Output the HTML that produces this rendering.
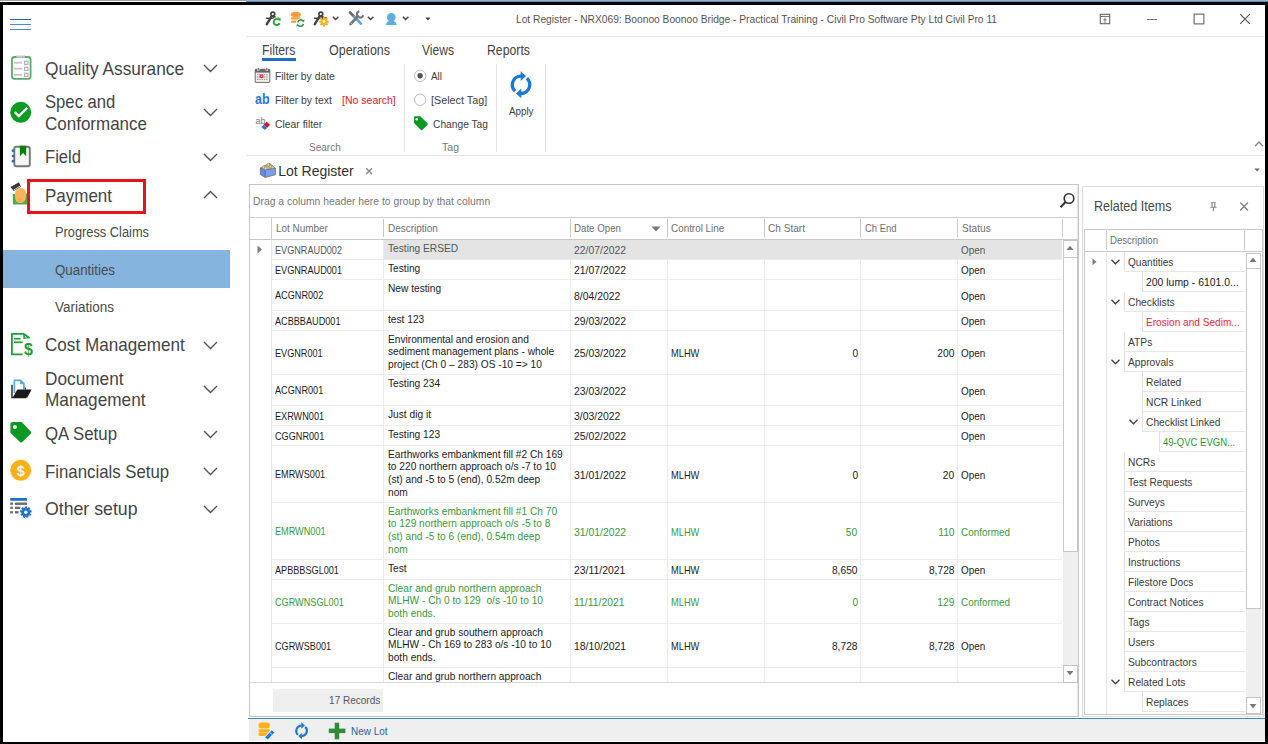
<!DOCTYPE html>
<html><head><meta charset="utf-8"><title>Lot Register</title>
<style>
html,body{margin:0;padding:0;width:1268px;height:744px;overflow:hidden;background:#fff;}
body{position:relative;font-family:"Liberation Sans", sans-serif;}
.a{position:absolute;}
.t{position:absolute;white-space:pre;font-family:"Liberation Sans", sans-serif;}
svg{position:absolute;overflow:visible;}
</style></head><body>
<div class="a" style="left:0px;top:0px;width:246px;height:1px;background:#a0a0a4;"></div>
<div class="a" style="left:246px;top:0px;width:1022px;height:1px;background:#b0aca8;"></div>
<div class="a" style="left:0px;top:1px;width:246px;height:1px;background:#ffffff;"></div>
<div class="a" style="left:246px;top:1px;width:1022px;height:1px;background:#4a90d9;"></div>
<div class="a" style="left:0px;top:2px;width:1268px;height:3px;background:#000;"></div>
<div class="a" style="left:0px;top:2px;width:3px;height:742px;background:#000;"></div>
<div class="a" style="left:1265px;top:2px;width:3px;height:742px;background:#000;"></div>
<div class="a" style="left:0px;top:742px;width:1268px;height:2px;background:#000;"></div>
<div class="a" style="left:10px;top:19px;width:21px;height:1px;background:#1e6cc0;"></div>
<div class="a" style="left:10px;top:18.6px;width:21px;height:1.6px;background:#1e6cc0;"></div>
<div class="a" style="left:10px;top:24px;width:21px;height:1.2px;background:#4b8bd2;"></div>
<div class="a" style="left:10px;top:29px;width:21px;height:1.2px;background:#4b8bd2;"></div>
<svg style="left:203px;top:63.9px" width="16" height="9"><polyline points="1,1 7.5,7.5 14,1" fill="none" stroke="#555" stroke-width="1.4"/></svg>
<svg style="left:203px;top:108.0px" width="16" height="9"><polyline points="1,1 7.5,7.5 14,1" fill="none" stroke="#555" stroke-width="1.4"/></svg>
<svg style="left:203px;top:153.2px" width="16" height="9"><polyline points="1,1 7.5,7.5 14,1" fill="none" stroke="#555" stroke-width="1.4"/></svg>
<svg style="left:203px;top:190.2px" width="16" height="9"><polyline points="1,8 7.5,1.5 14,8" fill="none" stroke="#505050" stroke-width="1.4"/></svg>
<div class="a" style="left:3px;top:250px;width:227px;height:38px;background:#85b4de;"></div>
<svg style="left:203px;top:341.2px" width="16" height="9"><polyline points="1,1 7.5,7.5 14,1" fill="none" stroke="#555" stroke-width="1.4"/></svg>
<svg style="left:203px;top:385.4px" width="16" height="9"><polyline points="1,1 7.5,7.5 14,1" fill="none" stroke="#555" stroke-width="1.4"/></svg>
<svg style="left:203px;top:429.7px" width="16" height="9"><polyline points="1,1 7.5,7.5 14,1" fill="none" stroke="#555" stroke-width="1.4"/></svg>
<svg style="left:203px;top:467.0px" width="16" height="9"><polyline points="1,1 7.5,7.5 14,1" fill="none" stroke="#555" stroke-width="1.4"/></svg>
<svg style="left:203px;top:504.9px" width="16" height="9"><polyline points="1,1 7.5,7.5 14,1" fill="none" stroke="#555" stroke-width="1.4"/></svg>
<div class="a" style="left:27px;top:179px;width:119px;height:35px;border:3px solid #e3141e;box-sizing:border-box;"></div>
<div class="a" style="left:246px;top:36px;width:1018px;height:1px;background:#e3e3e3;"></div>
<div class="a" style="left:262px;top:58px;width:34px;height:3px;background:#1f6cc0;"></div>
<div class="a" style="left:404px;top:64px;width:1px;height:88px;background:#e3e3e3;"></div>
<div class="a" style="left:496px;top:64px;width:1px;height:88px;background:#e3e3e3;"></div>
<div class="a" style="left:545px;top:64px;width:1px;height:88px;background:#e3e3e3;"></div>
<div class="a" style="left:246px;top:155px;width:1018px;height:1px;background:#e3e3e3;"></div>
<svg style="left:365px;top:167px" width="9" height="9"><path d="M1.2,1.2 L7,7 M7,1.2 L1.2,7" stroke="#8a8a8a" stroke-width="1.4"/></svg>
<div class="a" style="left:249px;top:184px;width:830px;height:533px;border:1px solid #c6c6c6;box-sizing:border-box;"></div>
<div class="a" style="left:1077px;top:185px;width:1px;height:55px;background:#e4e4e4;"></div>
<div class="a" style="left:1077px;top:682px;width:1px;height:34px;background:#e4e4e4;"></div>
<div class="a" style="left:249px;top:217px;width:829px;height:1px;background:#d0d0d0;"></div>
<div class="a" style="left:249px;top:239px;width:829px;height:1px;background:#c8c8c8;"></div>
<div class="a" style="left:271px;top:217px;width:1px;height:23px;background:#d0d0d0;"></div>
<div class="a" style="left:271px;top:240px;width:1px;height:443px;background:#e8e8e8;"></div>
<div class="a" style="left:383px;top:219px;width:1px;height:18px;background:#c8c8c8;"></div>
<div class="a" style="left:570px;top:219px;width:1px;height:18px;background:#c8c8c8;"></div>
<div class="a" style="left:667px;top:219px;width:1px;height:18px;background:#c8c8c8;"></div>
<div class="a" style="left:764px;top:219px;width:1px;height:18px;background:#c8c8c8;"></div>
<div class="a" style="left:860px;top:219px;width:1px;height:18px;background:#c8c8c8;"></div>
<div class="a" style="left:957px;top:219px;width:1px;height:18px;background:#c8c8c8;"></div>
<div class="a" style="left:1062px;top:219px;width:1px;height:18px;background:#c8c8c8;"></div>
<svg style="left:651px;top:226px" width="10" height="6"><polygon points="0.5,0.5 9.5,0.5 5,5.5" fill="#7a7a7a"/></svg>
<svg style="left:257px;top:245px" width="6" height="9"><polygon points="0.5,0.5 5,4.5 0.5,8.5" fill="#7d7d7d"/></svg>
<div class="a" style="left:272px;top:259px;width:790px;height:1px;background:#ececec;"></div>
<div class="a" style="left:272px;top:279px;width:790px;height:1px;background:#ececec;"></div>
<div class="a" style="left:272px;top:310px;width:790px;height:1px;background:#ececec;"></div>
<div class="a" style="left:272px;top:330px;width:790px;height:1px;background:#ececec;"></div>
<div class="a" style="left:272px;top:374px;width:790px;height:1px;background:#ececec;"></div>
<div class="a" style="left:272px;top:405px;width:790px;height:1px;background:#ececec;"></div>
<div class="a" style="left:272px;top:425px;width:790px;height:1px;background:#ececec;"></div>
<div class="a" style="left:272px;top:445px;width:790px;height:1px;background:#ececec;"></div>
<div class="a" style="left:272px;top:502px;width:790px;height:1px;background:#ececec;"></div>
<div class="a" style="left:272px;top:559px;width:790px;height:1px;background:#ececec;"></div>
<div class="a" style="left:272px;top:579px;width:790px;height:1px;background:#ececec;"></div>
<div class="a" style="left:272px;top:623px;width:790px;height:1px;background:#ececec;"></div>
<div class="a" style="left:272px;top:667px;width:790px;height:1px;background:#ececec;"></div>
<div class="a" style="left:249px;top:682px;width:829px;height:1px;background:#d8d8d8;"></div>
<div class="a" style="left:383px;top:240px;width:1px;height:442px;background:#ececec;"></div>
<div class="a" style="left:570px;top:240px;width:1px;height:442px;background:#ececec;"></div>
<div class="a" style="left:667px;top:240px;width:1px;height:442px;background:#ececec;"></div>
<div class="a" style="left:764px;top:240px;width:1px;height:442px;background:#ececec;"></div>
<div class="a" style="left:860px;top:240px;width:1px;height:442px;background:#ececec;"></div>
<div class="a" style="left:957px;top:240px;width:1px;height:442px;background:#ececec;"></div>
<div class="a" style="left:384px;top:240px;width:678px;height:19px;background:#e4e4e4;"></div>
<div class="a" style="left:1063px;top:240px;width:15px;height:442px;background:#efefef;"></div>
<div class="a" style="left:1063px;top:240px;width:15px;height:312px;background:#fff;border:1px solid #c6c6c6;box-sizing:border-box;"></div>
<div class="a" style="left:1063px;top:240px;width:15px;height:18px;background:#fff;border:1px solid #c6c6c6;box-sizing:border-box;"></div>
<svg style="left:1066px;top:245px" width="8" height="6"><polygon points="0.5,5 4,0.8 7.5,5" fill="#777"/></svg>
<div class="a" style="left:1063px;top:665px;width:15px;height:18px;background:#fff;border:1px solid #c6c6c6;box-sizing:border-box;"></div>
<svg style="left:1066px;top:670px" width="8" height="6"><polygon points="0.5,1 4,5.2 7.5,1" fill="#777"/></svg>
<div class="a" style="left:273px;top:689px;width:110px;height:23px;background:#efefef;"></div>
<div class="a" style="left:248px;top:718px;width:1017px;height:1px;background:#3d84cc;"></div>
<div class="a" style="left:249px;top:719px;width:1016px;height:22px;background:#efefef;"></div>
<div class="a" style="left:1082px;top:186px;width:182px;height:531px;border:1px solid #dedede;box-sizing:border-box;"></div>
<svg style="left:1239px;top:201px" width="10" height="11"><path d="M1.2,1.5 L9,9.5 M9,1.5 L1.2,9.5" stroke="#7a7a7a" stroke-width="1.1"/></svg>
<div class="a" style="left:1084px;top:229px;width:179px;height:486px;border:1px solid #c8c8c8;box-sizing:border-box;"></div>
<div class="a" style="left:1106px;top:231px;width:1px;height:19px;background:#c8c8c8;"></div>
<div class="a" style="left:1244px;top:231px;width:1px;height:19px;background:#c8c8c8;"></div>
<div class="a" style="left:1084px;top:251px;width:178px;height:1px;background:#c8c8c8;"></div>
<div class="a" style="left:1106px;top:252px;width:1px;height:462px;background:#e6e6e6;"></div>
<div class="a" style="left:1124px;top:252px;width:1px;height:20px;background:#e0e0e0;"></div>
<div class="a" style="left:1124px;top:271px;width:121px;height:1px;background:#e6e6e6;"></div>
<svg style="left:1111px;top:259px" width="9" height="6"><polyline points="0.5,0.8 4.5,4.8 8.5,0.8" fill="none" stroke="#444" stroke-width="1.4"/></svg>
<div class="a" style="left:1142px;top:272px;width:1px;height:20px;background:#e0e0e0;"></div>
<div class="a" style="left:1142px;top:291px;width:103px;height:1px;background:#e6e6e6;"></div>
<div class="a" style="left:1124px;top:292px;width:1px;height:20px;background:#e0e0e0;"></div>
<div class="a" style="left:1124px;top:311px;width:121px;height:1px;background:#e6e6e6;"></div>
<svg style="left:1111px;top:299px" width="9" height="6"><polyline points="0.5,0.8 4.5,4.8 8.5,0.8" fill="none" stroke="#444" stroke-width="1.4"/></svg>
<div class="a" style="left:1142px;top:312px;width:1px;height:20px;background:#e0e0e0;"></div>
<div class="a" style="left:1142px;top:331px;width:103px;height:1px;background:#e6e6e6;"></div>
<div class="a" style="left:1124px;top:332px;width:1px;height:20px;background:#e0e0e0;"></div>
<div class="a" style="left:1124px;top:351px;width:121px;height:1px;background:#e6e6e6;"></div>
<div class="a" style="left:1124px;top:352px;width:1px;height:20px;background:#e0e0e0;"></div>
<div class="a" style="left:1124px;top:371px;width:121px;height:1px;background:#e6e6e6;"></div>
<svg style="left:1111px;top:359px" width="9" height="6"><polyline points="0.5,0.8 4.5,4.8 8.5,0.8" fill="none" stroke="#444" stroke-width="1.4"/></svg>
<div class="a" style="left:1142px;top:372px;width:1px;height:20px;background:#e0e0e0;"></div>
<div class="a" style="left:1142px;top:391px;width:103px;height:1px;background:#e6e6e6;"></div>
<div class="a" style="left:1142px;top:392px;width:1px;height:20px;background:#e0e0e0;"></div>
<div class="a" style="left:1142px;top:411px;width:103px;height:1px;background:#e6e6e6;"></div>
<div class="a" style="left:1142px;top:412px;width:1px;height:20px;background:#e0e0e0;"></div>
<div class="a" style="left:1142px;top:431px;width:103px;height:1px;background:#e6e6e6;"></div>
<svg style="left:1129px;top:419px" width="9" height="6"><polyline points="0.5,0.8 4.5,4.8 8.5,0.8" fill="none" stroke="#444" stroke-width="1.4"/></svg>
<div class="a" style="left:1159px;top:432px;width:1px;height:20px;background:#e0e0e0;"></div>
<div class="a" style="left:1159px;top:451px;width:86px;height:1px;background:#e6e6e6;"></div>
<div class="a" style="left:1124px;top:452px;width:1px;height:20px;background:#e0e0e0;"></div>
<div class="a" style="left:1124px;top:471px;width:121px;height:1px;background:#e6e6e6;"></div>
<div class="a" style="left:1124px;top:472px;width:1px;height:20px;background:#e0e0e0;"></div>
<div class="a" style="left:1124px;top:491px;width:121px;height:1px;background:#e6e6e6;"></div>
<div class="a" style="left:1124px;top:492px;width:1px;height:20px;background:#e0e0e0;"></div>
<div class="a" style="left:1124px;top:511px;width:121px;height:1px;background:#e6e6e6;"></div>
<div class="a" style="left:1124px;top:512px;width:1px;height:20px;background:#e0e0e0;"></div>
<div class="a" style="left:1124px;top:531px;width:121px;height:1px;background:#e6e6e6;"></div>
<div class="a" style="left:1124px;top:532px;width:1px;height:20px;background:#e0e0e0;"></div>
<div class="a" style="left:1124px;top:551px;width:121px;height:1px;background:#e6e6e6;"></div>
<div class="a" style="left:1124px;top:552px;width:1px;height:20px;background:#e0e0e0;"></div>
<div class="a" style="left:1124px;top:571px;width:121px;height:1px;background:#e6e6e6;"></div>
<div class="a" style="left:1124px;top:572px;width:1px;height:20px;background:#e0e0e0;"></div>
<div class="a" style="left:1124px;top:591px;width:121px;height:1px;background:#e6e6e6;"></div>
<div class="a" style="left:1124px;top:592px;width:1px;height:20px;background:#e0e0e0;"></div>
<div class="a" style="left:1124px;top:611px;width:121px;height:1px;background:#e6e6e6;"></div>
<div class="a" style="left:1124px;top:612px;width:1px;height:20px;background:#e0e0e0;"></div>
<div class="a" style="left:1124px;top:631px;width:121px;height:1px;background:#e6e6e6;"></div>
<div class="a" style="left:1124px;top:632px;width:1px;height:20px;background:#e0e0e0;"></div>
<div class="a" style="left:1124px;top:651px;width:121px;height:1px;background:#e6e6e6;"></div>
<div class="a" style="left:1124px;top:652px;width:1px;height:20px;background:#e0e0e0;"></div>
<div class="a" style="left:1124px;top:671px;width:121px;height:1px;background:#e6e6e6;"></div>
<div class="a" style="left:1124px;top:672px;width:1px;height:20px;background:#e0e0e0;"></div>
<div class="a" style="left:1124px;top:691px;width:121px;height:1px;background:#e6e6e6;"></div>
<svg style="left:1111px;top:679px" width="9" height="6"><polyline points="0.5,0.8 4.5,4.8 8.5,0.8" fill="none" stroke="#444" stroke-width="1.4"/></svg>
<div class="a" style="left:1142px;top:692px;width:1px;height:20px;background:#e0e0e0;"></div>
<div class="a" style="left:1142px;top:711px;width:103px;height:1px;background:#e6e6e6;"></div>
<svg style="left:1092px;top:258px" width="6" height="8"><polygon points="0.5,0.5 4.5,3.8 0.5,7.3" fill="#7d7d7d"/></svg>
<div class="a" style="left:1246px;top:253px;width:15px;height:460px;background:#efefef;"></div>
<div class="a" style="left:1246px;top:253px;width:15px;height:356px;background:#fff;border:1px solid #c6c6c6;box-sizing:border-box;"></div>
<div class="a" style="left:1246px;top:253px;width:15px;height:16px;background:#fff;border:1px solid #c6c6c6;box-sizing:border-box;"></div>
<svg style="left:1249px;top:257px" width="8" height="6"><polygon points="0.5,5 4,0.8 7.5,5" fill="#777"/></svg>
<div class="a" style="left:1246px;top:697px;width:15px;height:17px;background:#fff;border:1px solid #c6c6c6;box-sizing:border-box;"></div>
<svg style="left:1249px;top:703px" width="8" height="6"><polygon points="0.5,1 4,5.2 7.5,1" fill="#777"/></svg>
<svg style="left:10px;top:55px" width="22" height="25" viewBox="0 0 22 25"><rect x="2" y="2" width="18.6" height="21.8" rx="2.5" fill="#fff" stroke="#5aab6a" stroke-width="1.8"/><line x1="6.3" y1="1.6" x2="15" y2="1.6" stroke="#c4c4c4" stroke-width="2.2"/><g stroke="#c4c4c4" stroke-width="1.7"><line x1="4" y1="7.7" x2="12" y2="7.7"/><line x1="4" y1="13.7" x2="12" y2="13.7"/><line x1="4" y1="19.8" x2="12" y2="19.8"/></g><g fill="none" stroke="#b4b4b4" stroke-width="1.3"><rect x="14.6" y="6.3" width="3.3" height="3.2"/><rect x="14.6" y="12.3" width="3.3" height="3.2"/><rect x="14.6" y="18.3" width="3.3" height="3.2"/></g></svg>
<svg style="left:9px;top:101px" width="24" height="24" viewBox="0 0 24 24"><circle cx="11.7" cy="11.3" r="10.5" fill="#0b9b23"/><polyline points="5.7,11.1 9.9,15.1 18.2,6.9" fill="none" stroke="#fff" stroke-width="2.4"/></svg>
<svg style="left:10px;top:144px" width="22" height="24" viewBox="0 0 22 24"><rect x="4.3" y="2.8" width="15.5" height="19.4" rx="2" fill="#f6f6f6" stroke="#777" stroke-width="1.9"/><polygon points="9.9,1.8 16.2,1.8 16.2,12.3 13.05,9.1 9.9,12.3" fill="#0a800a"/><g fill="#2a6fb0"><circle cx="3" cy="6.7" r="1.4"/><circle cx="3" cy="12.1" r="1.4"/><circle cx="3" cy="17.2" r="1.4"/></g></svg>
<svg style="left:6px;top:177px" width="24" height="30" viewBox="0 0 24 30"><polygon points="6.7,17 21,16.6 21.2,27.4 7,27.6" fill="#4cae4c"/><path d="M9.2,14.5 Q12,10.8 15.5,11 Q20.2,11.6 20.2,17.5 Q20.2,24 16.2,25.8 Q12.5,26.8 10.2,24.2 Q8.6,21.5 9,17.2 Z" fill="#fbb45c"/><g stroke="#e89a40" stroke-width="0.5"><line x1="13.2" y1="21" x2="13.6" y2="25"/><line x1="15.6" y1="21" x2="16" y2="25.4"/></g><polygon points="4.4,9.9 12.9,5.2 14.9,9.7 7.9,13.9" fill="#3a3a3a"/><line x1="7.8" y1="12.9" x2="14.2" y2="9.1" stroke="#e0e0e0" stroke-width="0.9"/></svg>
<svg style="left:9px;top:331px" width="26" height="27" viewBox="0 0 26 27"><path d="M13.7,23.4 H2.9 V2.9 H14.8 L20.6,6.9" fill="none" stroke="#19a037" stroke-width="1.8" stroke-linejoin="round"/><polygon points="14.3,2.2 21.2,6.9 14.3,8" fill="#19a037"/><polygon points="15.8,4.6 18.2,6.6 15.8,6.8" fill="#b8e0c0"/><line x1="5" y1="7.7" x2="11.6" y2="7.7" stroke="#19a037" stroke-width="1.7"/><line x1="5" y1="11.3" x2="13.7" y2="11.3" stroke="#19a037" stroke-width="1.7"/><text x="15" y="23.6" font-family="Liberation Sans" font-weight="bold" font-size="16" fill="#19a037">$</text></svg>
<svg style="left:9px;top:377px" width="25" height="23" viewBox="0 0 25 23"><path d="M5.4,16 V3.4 H11.6 L14.9,6.7 V12.5" fill="none" stroke="#5aa9e6" stroke-width="1.7"/><polygon points="11,3.4 14.9,7.3 11,7.3" fill="#5aa9e6"/><path d="M3,7.8 V20.6 H17" fill="none" stroke="#222" stroke-width="1.4"/><polygon points="8.3,12.6 22.6,12.6 18.2,20.8 3.6,20.8" fill="#1a1a1a"/><rect x="15.8" y="10.6" width="1.2" height="2.2" fill="#333"/></svg>
<svg style="left:9px;top:421px" width="25" height="25" viewBox="0 0 25 25"><path d="M1.4,3 Q1.4,1 3.4,1 H12.7 L22,10.7 Q22.7,11.6 22,12.4 L13,21.2 Q12.1,22 11.3,21.2 L1.4,11.7 Z" fill="#0a9a22"/><circle cx="5.9" cy="5.9" r="2" fill="#fff"/></svg>
<svg style="left:9px;top:459px" width="24" height="24" viewBox="0 0 24 24"><circle cx="11.7" cy="11.3" r="10.5" fill="#fbb017"/><text x="11.7" y="16.6" text-anchor="middle" font-family="Liberation Sans" font-weight="bold" font-size="14.5" fill="#fff">$</text></svg>
<svg style="left:9px;top:497px" width="26" height="24" viewBox="0 0 26 24"><rect x="1.2" y="1" width="16.8" height="2.8" fill="#1a73d0"/><g fill="#6a6a6a"><rect x="1.2" y="5.5" width="2.7" height="2.4"/><rect x="1.2" y="9.7" width="2.7" height="2.2"/><rect x="1.2" y="14.1" width="2.7" height="2.3"/><rect x="5.9" y="5.5" width="12.1" height="2.4"/><polygon points="5.9,9.7 11.6,9.7 10.6,11.9 5.9,11.9"/><rect x="5.9" y="14.1" width="3.6" height="2.3"/></g><g transform="translate(16.8,15.2)"><circle r="4.3" fill="#1a73d0"/><rect x="-1.1" y="-5.8" width="2.2" height="2.5" fill="#1a73d0" transform="rotate(0)"/><rect x="-1.1" y="-5.8" width="2.2" height="2.5" fill="#1a73d0" transform="rotate(40)"/><rect x="-1.1" y="-5.8" width="2.2" height="2.5" fill="#1a73d0" transform="rotate(80)"/><rect x="-1.1" y="-5.8" width="2.2" height="2.5" fill="#1a73d0" transform="rotate(120)"/><rect x="-1.1" y="-5.8" width="2.2" height="2.5" fill="#1a73d0" transform="rotate(160)"/><rect x="-1.1" y="-5.8" width="2.2" height="2.5" fill="#1a73d0" transform="rotate(200)"/><rect x="-1.1" y="-5.8" width="2.2" height="2.5" fill="#1a73d0" transform="rotate(240)"/><rect x="-1.1" y="-5.8" width="2.2" height="2.5" fill="#1a73d0" transform="rotate(280)"/><rect x="-1.1" y="-5.8" width="2.2" height="2.5" fill="#1a73d0" transform="rotate(320)"/><circle r="1.7" fill="#fff"/></g></svg>
<svg style="left:262px;top:8px" width="22" height="22" viewBox="0 0 22 22"><circle cx="10.8" cy="6.1" r="1.9" fill="none" stroke="#444" stroke-width="1.7"/><path d="M9.6,8.4 L4.8,16.2 M12,8.4 L14.5,12.5" stroke="#444" stroke-width="2.5" fill="none" stroke-linecap="round"/><path d="M4.4,10.3 Q10,10.6 16.6,9.9" stroke="#444" stroke-width="1.4" fill="none" stroke-linecap="round"/><circle cx="14.6" cy="14" r="4.7" fill="#fff"/><path d="M17.2,12 A3.1,3.1 0 1 0 17.6,15.2" fill="none" stroke="#1fa53a" stroke-width="1.9"/><polygon points="15.6,10.4 18.9,10.3 18.3,13.6" fill="#1fa53a"/></svg>
<svg style="left:286px;top:8px" width="22" height="22" viewBox="0 0 22 22"><g fill="#f89a3a"><ellipse cx="9.9" cy="6.4" rx="5" ry="2.6"/><rect x="4.9" y="9.2" width="9.9" height="2.3" rx="1.1"/><rect x="4.9" y="12.5" width="9.9" height="2.3" rx="1.1"/></g><circle cx="14.5" cy="15.1" r="4.6" fill="#fff"/><path d="M11.6,14.2 A3.1,3.1 0 0 1 17.2,13.3 M17.4,16 A3.1,3.1 0 0 1 11.8,16.9" fill="none" stroke="#2a9a44" stroke-width="1.6"/><polygon points="16,12.2 18.6,11.6 17.9,14.6" fill="#2a9a44"/><polygon points="13,18 10.4,18.6 11.1,15.6" fill="#2a9a44"/></svg>
<svg style="left:310px;top:8px" width="22" height="22" viewBox="0 0 22 22"><circle cx="10.8" cy="6.1" r="1.9" fill="none" stroke="#444" stroke-width="1.7"/><path d="M9.6,8.4 L4.8,16.2 M12,8.4 L14.5,12.5" stroke="#444" stroke-width="2.5" fill="none" stroke-linecap="round"/><path d="M4.4,10.3 Q10,10.6 16.6,9.9" stroke="#444" stroke-width="1.4" fill="none" stroke-linecap="round"/><g transform="translate(14,13.7)"><circle r="3.5" fill="#f7b01a"/><rect x="-0.9" y="-4.9" width="1.8" height="2.2" fill="#f7b01a" transform="rotate(0)"/><rect x="-0.9" y="-4.9" width="1.8" height="2.2" fill="#f7b01a" transform="rotate(45)"/><rect x="-0.9" y="-4.9" width="1.8" height="2.2" fill="#f7b01a" transform="rotate(90)"/><rect x="-0.9" y="-4.9" width="1.8" height="2.2" fill="#f7b01a" transform="rotate(135)"/><rect x="-0.9" y="-4.9" width="1.8" height="2.2" fill="#f7b01a" transform="rotate(180)"/><rect x="-0.9" y="-4.9" width="1.8" height="2.2" fill="#f7b01a" transform="rotate(225)"/><rect x="-0.9" y="-4.9" width="1.8" height="2.2" fill="#f7b01a" transform="rotate(270)"/><rect x="-0.9" y="-4.9" width="1.8" height="2.2" fill="#f7b01a" transform="rotate(315)"/><circle r="1.4" fill="#fff"/></g></svg>
<svg style="left:332px;top:16px" width="8" height="5" viewBox="0 0 8 5"><polyline points="0.8,0.8 3.6,3.6 6.4,0.8" fill="none" stroke="#444" stroke-width="1.4"/></svg>
<svg style="left:346px;top:8px" width="20" height="20" viewBox="0 0 20 20"><path d="M4,4.5 L8,8.5" stroke="#6a6a6a" stroke-width="2.6" stroke-linecap="round"/><path d="M8.3,8.8 L14.8,15.6" stroke="#58a8ef" stroke-width="2.8" stroke-linecap="round"/><path d="M13.4,3.2 A3.2,3.2 0 1 0 17.2,7.2" fill="none" stroke="#777" stroke-width="2.2"/><path d="M12,8.6 L4.5,16" stroke="#777" stroke-width="2.8" stroke-linecap="round"/><circle cx="5.2" cy="15.3" r="0.6" fill="#ddd"/></svg>
<svg style="left:367px;top:16px" width="8" height="5" viewBox="0 0 8 5"><polyline points="0.8,0.8 3.6,3.6 6.4,0.8" fill="none" stroke="#444" stroke-width="1.4"/></svg>
<svg style="left:385px;top:11px" width="13" height="15" viewBox="0 0 13 15"><circle cx="6.3" cy="6.2" r="4.3" fill="#5aafe0"/><path d="M0.7,14 Q1.5,10.6 4,10 L8.6,10 Q11,10.6 11.8,14 Z" fill="#5aafe0"/></svg>
<svg style="left:402px;top:16px" width="8" height="5" viewBox="0 0 8 5"><polyline points="0.8,0.8 3.6,3.6 6.4,0.8" fill="none" stroke="#444" stroke-width="1.4"/></svg>
<svg style="left:425px;top:17px" width="6" height="4" viewBox="0 0 6 4"><polygon points="0.3,0.5 5.5,0.5 2.9,3.5" fill="#444"/></svg>
<svg style="left:1099px;top:13px" width="12" height="12" viewBox="0 0 12 12"><rect x="1.3" y="1.3" width="9.4" height="9.4" fill="none" stroke="#666" stroke-width="1.1"/><line x1="1.3" y1="3.4" x2="10.7" y2="3.4" stroke="#666" stroke-width="1"/><path d="M6,9.8 V5.8 M4.4,7.2 L6,5.5 L7.6,7.2" stroke="#666" stroke-width="1" fill="none"/></svg>
<div class="a" style="left:1147px;top:19px;width:10px;height:1px;background:#777;"></div>
<svg style="left:1193px;top:13px" width="12" height="12" viewBox="0 0 12 12"><rect x="1.1" y="1.1" width="9.8" height="9.8" fill="none" stroke="#666" stroke-width="1.1"/></svg>
<svg style="left:1239px;top:13px" width="12" height="12" viewBox="0 0 12 12"><path d="M1.2,1.2 L10.8,10.8 M10.8,1.2 L1.2,10.8" stroke="#555" stroke-width="1.2"/></svg>
<svg style="left:254px;top:67px" width="17" height="17" viewBox="0 0 17 17"><rect x="1.2" y="2.2" width="14.6" height="13.3" rx="1.2" fill="#ececec" stroke="#777" stroke-width="1.1"/><rect x="1.2" y="2.2" width="14.6" height="3.4" fill="#666"/><g fill="#fff"><rect x="3" y="0.6" width="2.4" height="3"/><rect x="11.6" y="0.6" width="2.4" height="3"/></g><g fill="#666"><rect x="3.6" y="0.9" width="1.2" height="2.4"/><rect x="12.2" y="0.9" width="1.2" height="2.4"/></g><rect x="3.0" y="7.0" width="1.3" height="1.2" fill="#9a9a9a"/><rect x="5.3" y="7.0" width="1.3" height="1.2" fill="#9a9a9a"/><rect x="7.6" y="7.0" width="1.3" height="1.2" fill="#9a9a9a"/><rect x="9.899999999999999" y="7.0" width="1.3" height="1.2" fill="#9a9a9a"/><rect x="12.2" y="7.0" width="1.3" height="1.2" fill="#9a9a9a"/><rect x="3.0" y="9.4" width="1.3" height="1.2" fill="#9a9a9a"/><rect x="5.3" y="9.4" width="1.3" height="1.2" fill="#9a9a9a"/><rect x="7.6" y="9.4" width="1.3" height="1.2" fill="#9a9a9a"/><rect x="9.899999999999999" y="9.4" width="1.3" height="1.2" fill="#9a9a9a"/><rect x="12.2" y="9.4" width="1.3" height="1.2" fill="#9a9a9a"/><rect x="3.0" y="11.8" width="1.3" height="1.2" fill="#9a9a9a"/><rect x="5.3" y="11.8" width="1.3" height="1.2" fill="#9a9a9a"/><rect x="7.6" y="11.8" width="1.3" height="1.2" fill="#9a9a9a"/><rect x="9.899999999999999" y="11.8" width="1.3" height="1.2" fill="#9a9a9a"/><rect x="12.2" y="11.8" width="1.3" height="1.2" fill="#9a9a9a"/><rect x="5.6" y="7.6" width="3.8" height="3.4" fill="#e8343c"/><rect x="6.8" y="8.7" width="1.4" height="1.2" fill="#fbb"/></svg>
<svg style="left:254px;top:116px" width="18" height="15" viewBox="0 0 18 15"><text x="1.5" y="7.8" font-family="Liberation Sans" font-size="9" fill="#777">ab</text><polygon points="12.6,5.8 16,8.8 13,11.9 9.6,8.8" fill="#d9141e"/><polygon points="9.6,8.8 13,11.9 10.8,14 7.4,11" fill="#1e7ad8"/></svg>
<svg style="left:413px;top:69px" width="15" height="14" viewBox="0 0 15 14"><circle cx="7.1" cy="6.8" r="5.7" fill="#fff" stroke="#bdbdbd" stroke-width="1"/><circle cx="7.1" cy="6.8" r="2.7" fill="#555"/></svg>
<svg style="left:413px;top:93px" width="15" height="14" viewBox="0 0 15 14"><circle cx="7.1" cy="6.7" r="5.7" fill="#fff" stroke="#bdbdbd" stroke-width="1"/></svg>
<svg style="left:413px;top:115px" width="16" height="17" viewBox="0 0 16 17"><path d="M1,2.2 Q1,1.2 2,1.2 H7.3 L14.6,8.5 Q15.2,9.1 14.6,9.7 L9.2,15 Q8.6,15.6 8,15 L1,8 Z" fill="#0a9a22"/><circle cx="3.8" cy="4.3" r="1.3" fill="#fff"/></svg>
<svg style="left:500px;top:66px" width="44" height="39" viewBox="0 0 44 39"><path d="M21.00,10.10 A8.7,8.7 0 0 0 15.07,25.16" fill="none" stroke="#1a78d8" stroke-width="3.3"/><path d="M26.82,12.33 A8.7,8.7 0 0 1 21.00,27.50" fill="none" stroke="#1a78d8" stroke-width="3.3"/><polygon points="20.70,5.30 26.04,10.10 20.70,14.90" fill="#1a78d8"/><polygon points="21.30,22.70 15.96,27.50 21.30,32.30" fill="#1a78d8"/></svg>
<svg style="left:1254px;top:140px" width="11" height="8" viewBox="0 0 11 8"><polyline points="1,6.3 5,2 9,6.3" fill="none" stroke="#888" stroke-width="1.3"/></svg>
<svg style="left:1254px;top:168px" width="7" height="5" viewBox="0 0 7 5"><polygon points="0.4,0.6 5.8,0.6 3.1,3.6" fill="#666"/></svg>
<svg style="left:254px;top:158px" width="24" height="22" viewBox="0 0 24 22"><polygon points="6.3,10 15.5,5.3 21.5,10.3 11.3,11.9" fill="#c9bd8a" stroke="#666" stroke-width="0.7"/><polygon points="6.3,10 11.3,11.9 11.3,19.4 6.3,16.6" fill="#5f8ef0" stroke="#666" stroke-width="0.7"/><polygon points="11.3,11.9 21.5,10.3 21.5,16.8 11.3,19.4" fill="#7aa0f5" stroke="#666" stroke-width="0.7"/><g fill="#ddd3a0" stroke="#8a8060" stroke-width="0.5"><ellipse cx="9.6" cy="9.2" rx="1.3" ry="1.6"/><ellipse cx="11.6" cy="10.3" rx="1.3" ry="1.6"/><ellipse cx="14.3" cy="6.8" rx="1.3" ry="1.5"/><ellipse cx="16.5" cy="8.4" rx="1.3" ry="1.5"/><ellipse cx="18.4" cy="9.3" rx="1.3" ry="1.4"/></g></svg>
<svg style="left:1059px;top:192px" width="17" height="17" viewBox="0 0 17 17"><circle cx="10" cy="6.5" r="4.8" fill="none" stroke="#333" stroke-width="1.6"/><line x1="6.6" y1="10" x2="1.5" y2="15.2" stroke="#333" stroke-width="2"/></svg>
<svg style="left:1208px;top:201px" width="10" height="11" viewBox="0 0 10 11"><path d="M3,1.8 H7.8 M4,1.8 V5.8 M6.8,1.8 V5.8 M2.2,6.3 H8.6 M5.4,6.3 V10" stroke="#8a8a8a" stroke-width="1.1" fill="none"/></svg>
<svg style="left:252px;top:718px" width="24" height="24" viewBox="0 0 24 24"><g fill="#fbb017"><rect x="6.5" y="4.5" width="11.4" height="6.1" rx="3"/><rect x="6.5" y="11.3" width="11.4" height="2.9" rx="1.4"/><rect x="6.5" y="14.5" width="11.4" height="3.5" rx="1.7"/></g><path d="M14.2,20.6 L21.3,13.2" stroke="#efefef" stroke-width="5.5"/><path d="M14.4,20.4 L21.1,13.4" stroke="#1a78d8" stroke-width="3.4"/><path d="M18.6,16 L19.4,15.2" stroke="#9cc4ee" stroke-width="3.6"/></svg>
<svg style="left:290px;top:718px" width="25" height="27" viewBox="0 0 25 27"><path d="M11.60,7.50 A5.3,5.3 0 0 0 7.99,16.68" fill="none" stroke="#1a78d8" stroke-width="2.1"/><path d="M15.15,8.86 A5.3,5.3 0 0 1 11.60,18.10" fill="none" stroke="#1a78d8" stroke-width="2.1"/><polygon points="11.30,4.30 14.96,7.50 11.30,10.70" fill="#1a78d8"/><polygon points="11.90,14.90 8.24,18.10 11.90,21.30" fill="#1a78d8"/></svg>
<svg style="left:328px;top:722px" width="18" height="18" viewBox="0 0 18 18"><rect x="6.7" y="0.7" width="4.5" height="16.6" fill="#2f8c3a"/><rect x="0.8" y="6.6" width="16.6" height="4.5" fill="#2f8c3a"/></svg>
<div class="t" style="left:44.60px;top:59.84px;font-size:18.5px;line-height:18.5px;color:#444;transform:scaleX(0.9322);transform-origin:left;">Quality Assurance</div>
<div class="t" style="left:44.60px;top:93.14px;font-size:18.5px;line-height:18.5px;color:#444;transform:scaleX(0.9004);transform-origin:left;">Spec and</div>
<div class="t" style="left:44.60px;top:114.64px;font-size:18.5px;line-height:18.5px;color:#444;transform:scaleX(0.9184);transform-origin:left;">Conformance</div>
<div class="t" style="left:44.60px;top:148.34px;font-size:18.5px;line-height:18.5px;color:#444;transform:scaleX(0.8975);transform-origin:left;">Field</div>
<div class="t" style="left:44.60px;top:186.54px;font-size:18.5px;line-height:18.5px;color:#444;transform:scaleX(0.9176);transform-origin:left;">Payment</div>
<div class="t" style="left:54.70px;top:224.85px;font-size:14px;line-height:14px;color:#4a4a4a;transform:scaleX(0.9153);transform-origin:left;">Progress Claims</div>
<div class="t" style="left:54.70px;top:262.95px;font-size:14px;line-height:14px;color:#4a4a4a;transform:scaleX(0.9517);transform-origin:left;">Quantities</div>
<div class="t" style="left:54.70px;top:300.15px;font-size:14px;line-height:14px;color:#4a4a4a;transform:scaleX(0.9638);transform-origin:left;">Variations</div>
<div class="t" style="left:44.60px;top:336.34px;font-size:18.5px;line-height:18.5px;color:#444;transform:scaleX(0.9241);transform-origin:left;">Cost Management</div>
<div class="t" style="left:44.60px;top:370.34px;font-size:18.5px;line-height:18.5px;color:#444;transform:scaleX(0.9309);transform-origin:left;">Document</div>
<div class="t" style="left:44.60px;top:391.34px;font-size:18.5px;line-height:18.5px;color:#444;transform:scaleX(0.9307);transform-origin:left;">Management</div>
<div class="t" style="left:44.60px;top:425.34px;font-size:18.5px;line-height:18.5px;color:#444;transform:scaleX(0.9091);transform-origin:left;">QA Setup</div>
<div class="t" style="left:44.60px;top:462.54px;font-size:18.5px;line-height:18.5px;color:#444;transform:scaleX(0.9080);transform-origin:left;">Financials Setup</div>
<div class="t" style="left:44.60px;top:500.04px;font-size:18.5px;line-height:18.5px;color:#444;transform:scaleX(0.9568);transform-origin:left;">Other setup</div>
<div class="t" style="left:516.40px;top:13.69px;font-size:11px;line-height:11px;color:#555;transform:scaleX(0.9292);transform-origin:left;">Lot Register - NRX069: Boonoo Boonoo Bridge - Practical Training - Civil Pro Software Pty Ltd Civil Pro 11</div>
<div class="t" style="left:262.40px;top:43.15px;font-size:14px;line-height:14px;color:#444;transform:scaleX(0.8734);transform-origin:left;">Filters</div>
<div class="t" style="left:328.50px;top:43.15px;font-size:14px;line-height:14px;color:#444;transform:scaleX(0.8907);transform-origin:left;">Operations</div>
<div class="t" style="left:422.00px;top:43.15px;font-size:14px;line-height:14px;color:#444;transform:scaleX(0.8627);transform-origin:left;">Views</div>
<div class="t" style="left:486.50px;top:43.15px;font-size:14px;line-height:14px;color:#444;transform:scaleX(0.8770);transform-origin:left;">Reports</div>
<div class="t" style="left:274.50px;top:70.89px;font-size:11px;line-height:11px;color:#404040;transform:scaleX(0.9403);transform-origin:left;">Filter by date</div>
<div class="t" style="left:274.50px;top:94.89px;font-size:11px;line-height:11px;color:#404040;transform:scaleX(0.9481);transform-origin:left;">Filter by text</div>
<div class="t" style="left:342.40px;top:94.89px;font-size:11px;line-height:11px;color:#e8141e;transform:scaleX(0.9564);transform-origin:left;">[No search]</div>
<div class="t" style="left:274.50px;top:118.89px;font-size:11px;line-height:11px;color:#404040;transform:scaleX(0.9436);transform-origin:left;">Clear filter</div>
<div class="t" style="left:309.00px;top:141.69px;font-size:11px;line-height:11px;color:#777;transform:scaleX(0.9094);transform-origin:left;">Search</div>
<div class="t" style="left:430.80px;top:70.89px;font-size:11px;line-height:11px;color:#404040;transform:scaleX(0.8991);transform-origin:left;">All</div>
<div class="t" style="left:430.80px;top:94.89px;font-size:11px;line-height:11px;color:#404040;transform:scaleX(0.9811);transform-origin:left;">[Select Tag]</div>
<div class="t" style="left:432.80px;top:118.89px;font-size:11px;line-height:11px;color:#404040;transform:scaleX(0.9302);transform-origin:left;">Change Tag</div>
<div class="t" style="left:442.00px;top:141.69px;font-size:11px;line-height:11px;color:#777;transform:scaleX(0.9577);transform-origin:left;">Tag</div>
<div class="t" style="left:508.50px;top:105.69px;font-size:11px;line-height:11px;color:#404040;transform:scaleX(0.8899);transform-origin:left;">Apply</div>
<div class="t" style="left:278.20px;top:164.15px;font-size:14px;line-height:14px;color:#333;">Lot Register</div>
<div class="t" style="left:253.30px;top:196.29px;font-size:11px;line-height:11px;color:#777;transform:scaleX(0.9415);transform-origin:left;">Drag a column header here to group by that column</div>
<div class="t" style="left:275.60px;top:222.99px;font-size:11px;line-height:11px;color:#6e6e6e;transform:scaleX(0.9029);transform-origin:left;">Lot Number</div>
<div class="t" style="left:387.80px;top:222.99px;font-size:11px;line-height:11px;color:#6e6e6e;transform:scaleX(0.9068);transform-origin:left;">Description</div>
<div class="t" style="left:573.80px;top:222.99px;font-size:11px;line-height:11px;color:#6e6e6e;transform:scaleX(0.8834);transform-origin:left;">Date Open</div>
<div class="t" style="left:670.60px;top:222.99px;font-size:11px;line-height:11px;color:#6e6e6e;transform:scaleX(0.8984);transform-origin:left;">Control Line</div>
<div class="t" style="left:767.60px;top:222.99px;font-size:11px;line-height:11px;color:#6e6e6e;transform:scaleX(0.9168);transform-origin:left;">Ch Start</div>
<div class="t" style="left:864.50px;top:222.99px;font-size:11px;line-height:11px;color:#6e6e6e;transform:scaleX(0.8555);transform-origin:left;">Ch End</div>
<div class="t" style="left:961.50px;top:222.99px;font-size:11px;line-height:11px;color:#6e6e6e;transform:scaleX(0.9202);transform-origin:left;">Status</div>
<div class="t" style="left:274.80px;top:244.59px;font-size:11px;line-height:11px;color:#555;transform:scaleX(0.8300);transform-origin:left;">EVGNRAUD002</div>
<div class="t" style="left:388.20px;top:242.59px;font-size:11px;line-height:11px;color:#555;transform:scaleX(0.9250);transform-origin:left;">Testing ERSED</div>
<div class="t" style="left:573.80px;top:245.19px;font-size:11px;line-height:11px;color:#555;transform:scaleX(0.9460);transform-origin:left;">22/07/2022</div>
<div class="t" style="left:961.30px;top:245.19px;font-size:11px;line-height:11px;color:#555;transform:scaleX(0.9000);transform-origin:left;">Open</div>
<div class="t" style="left:274.80px;top:264.59px;font-size:11px;line-height:11px;color:#1b1b1b;transform:scaleX(0.8300);transform-origin:left;">EVGNRAUD001</div>
<div class="t" style="left:388.20px;top:262.59px;font-size:11px;line-height:11px;color:#1b1b1b;transform:scaleX(0.9250);transform-origin:left;">Testing</div>
<div class="t" style="left:573.80px;top:265.19px;font-size:11px;line-height:11px;color:#1b1b1b;transform:scaleX(0.9460);transform-origin:left;">21/07/2022</div>
<div class="t" style="left:961.30px;top:265.19px;font-size:11px;line-height:11px;color:#1b1b1b;transform:scaleX(0.9000);transform-origin:left;">Open</div>
<div class="t" style="left:274.80px;top:290.09px;font-size:11px;line-height:11px;color:#1b1b1b;transform:scaleX(0.8300);transform-origin:left;">ACGNR002</div>
<div class="t" style="left:388.20px;top:282.59px;font-size:11px;line-height:11px;color:#1b1b1b;transform:scaleX(0.9250);transform-origin:left;">New testing</div>
<div class="t" style="left:573.80px;top:290.69px;font-size:11px;line-height:11px;color:#1b1b1b;transform:scaleX(0.9460);transform-origin:left;">8/04/2022</div>
<div class="t" style="left:961.30px;top:290.69px;font-size:11px;line-height:11px;color:#1b1b1b;transform:scaleX(0.9000);transform-origin:left;">Open</div>
<div class="t" style="left:274.80px;top:315.59px;font-size:11px;line-height:11px;color:#1b1b1b;transform:scaleX(0.8300);transform-origin:left;">ACBBBAUD001</div>
<div class="t" style="left:388.20px;top:313.59px;font-size:11px;line-height:11px;color:#1b1b1b;transform:scaleX(0.9250);transform-origin:left;">test 123</div>
<div class="t" style="left:573.80px;top:316.19px;font-size:11px;line-height:11px;color:#1b1b1b;transform:scaleX(0.9460);transform-origin:left;">29/03/2022</div>
<div class="t" style="left:961.30px;top:316.19px;font-size:11px;line-height:11px;color:#1b1b1b;transform:scaleX(0.9000);transform-origin:left;">Open</div>
<div class="t" style="left:274.80px;top:347.59px;font-size:11px;line-height:11px;color:#1b1b1b;transform:scaleX(0.8300);transform-origin:left;">EVGNR001</div>
<div class="t" style="left:388.20px;top:333.59px;font-size:11px;line-height:11px;color:#1b1b1b;transform:scaleX(0.9250);transform-origin:left;">Environmental and erosion and</div>
<div class="t" style="left:388.20px;top:346.44px;font-size:11px;line-height:11px;color:#1b1b1b;transform:scaleX(0.9250);transform-origin:left;">sediment management plans - whole</div>
<div class="t" style="left:388.20px;top:359.29px;font-size:11px;line-height:11px;color:#1b1b1b;transform:scaleX(0.9250);transform-origin:left;">project (Ch 0 – 283) OS -10 =&gt; 10</div>
<div class="t" style="left:573.80px;top:348.19px;font-size:11px;line-height:11px;color:#1b1b1b;transform:scaleX(0.9460);transform-origin:left;">25/03/2022</div>
<div class="t" style="left:670.80px;top:348.19px;font-size:11px;line-height:11px;color:#1b1b1b;transform:scaleX(0.8450);transform-origin:left;">MLHW</div>
<div class="t" style="left:851.58px;top:348.19px;font-size:11px;line-height:11px;color:#1b1b1b;transform:scaleX(0.9300);transform-origin:right;">0</div>
<div class="t" style="left:935.84px;top:348.19px;font-size:11px;line-height:11px;color:#1b1b1b;transform:scaleX(0.9300);transform-origin:right;">200</div>
<div class="t" style="left:961.30px;top:348.19px;font-size:11px;line-height:11px;color:#1b1b1b;transform:scaleX(0.9000);transform-origin:left;">Open</div>
<div class="t" style="left:274.80px;top:385.09px;font-size:11px;line-height:11px;color:#1b1b1b;transform:scaleX(0.8300);transform-origin:left;">ACGNR001</div>
<div class="t" style="left:388.20px;top:377.59px;font-size:11px;line-height:11px;color:#1b1b1b;transform:scaleX(0.9250);transform-origin:left;">Testing 234</div>
<div class="t" style="left:573.80px;top:385.69px;font-size:11px;line-height:11px;color:#1b1b1b;transform:scaleX(0.9460);transform-origin:left;">23/03/2022</div>
<div class="t" style="left:961.30px;top:385.69px;font-size:11px;line-height:11px;color:#1b1b1b;transform:scaleX(0.9000);transform-origin:left;">Open</div>
<div class="t" style="left:274.80px;top:410.59px;font-size:11px;line-height:11px;color:#1b1b1b;transform:scaleX(0.8300);transform-origin:left;">EXRWN001</div>
<div class="t" style="left:388.20px;top:408.59px;font-size:11px;line-height:11px;color:#1b1b1b;transform:scaleX(0.9250);transform-origin:left;">Just dig it</div>
<div class="t" style="left:573.80px;top:411.19px;font-size:11px;line-height:11px;color:#1b1b1b;transform:scaleX(0.9460);transform-origin:left;">3/03/2022</div>
<div class="t" style="left:961.30px;top:411.19px;font-size:11px;line-height:11px;color:#1b1b1b;transform:scaleX(0.9000);transform-origin:left;">Open</div>
<div class="t" style="left:274.80px;top:430.59px;font-size:11px;line-height:11px;color:#1b1b1b;transform:scaleX(0.8300);transform-origin:left;">CGGNR001</div>
<div class="t" style="left:388.20px;top:428.59px;font-size:11px;line-height:11px;color:#1b1b1b;transform:scaleX(0.9250);transform-origin:left;">Testing 123</div>
<div class="t" style="left:573.80px;top:431.19px;font-size:11px;line-height:11px;color:#1b1b1b;transform:scaleX(0.9460);transform-origin:left;">25/02/2022</div>
<div class="t" style="left:961.30px;top:431.19px;font-size:11px;line-height:11px;color:#1b1b1b;transform:scaleX(0.9000);transform-origin:left;">Open</div>
<div class="t" style="left:274.80px;top:469.09px;font-size:11px;line-height:11px;color:#1b1b1b;transform:scaleX(0.8300);transform-origin:left;">EMRWS001</div>
<div class="t" style="left:388.20px;top:448.59px;font-size:11px;line-height:11px;color:#1b1b1b;transform:scaleX(0.9250);transform-origin:left;">Earthworks embankment fill #2 Ch 169</div>
<div class="t" style="left:388.20px;top:461.44px;font-size:11px;line-height:11px;color:#1b1b1b;transform:scaleX(0.9250);transform-origin:left;">to 220 northern approach o/s -7 to 10</div>
<div class="t" style="left:388.20px;top:474.29px;font-size:11px;line-height:11px;color:#1b1b1b;transform:scaleX(0.9250);transform-origin:left;">(st) and -5 to 5 (end), 0.52m deep</div>
<div class="t" style="left:388.20px;top:487.14px;font-size:11px;line-height:11px;color:#1b1b1b;transform:scaleX(0.9250);transform-origin:left;">nom</div>
<div class="t" style="left:573.80px;top:469.69px;font-size:11px;line-height:11px;color:#1b1b1b;transform:scaleX(0.9460);transform-origin:left;">31/01/2022</div>
<div class="t" style="left:670.80px;top:469.69px;font-size:11px;line-height:11px;color:#1b1b1b;transform:scaleX(0.8450);transform-origin:left;">MLHW</div>
<div class="t" style="left:851.58px;top:469.69px;font-size:11px;line-height:11px;color:#1b1b1b;transform:scaleX(0.9300);transform-origin:right;">0</div>
<div class="t" style="left:941.95px;top:469.69px;font-size:11px;line-height:11px;color:#1b1b1b;transform:scaleX(0.9300);transform-origin:right;">20</div>
<div class="t" style="left:961.30px;top:469.69px;font-size:11px;line-height:11px;color:#1b1b1b;transform:scaleX(0.9000);transform-origin:left;">Open</div>
<div class="t" style="left:274.80px;top:526.09px;font-size:11px;line-height:11px;color:#3a9a3a;transform:scaleX(0.8300);transform-origin:left;">EMRWN001</div>
<div class="t" style="left:388.20px;top:505.59px;font-size:11px;line-height:11px;color:#3a9a3a;transform:scaleX(0.9250);transform-origin:left;">Earthworks embankment fill #1 Ch 70</div>
<div class="t" style="left:388.20px;top:518.44px;font-size:11px;line-height:11px;color:#3a9a3a;transform:scaleX(0.9250);transform-origin:left;">to 129 northern approach o/s -5 to 8</div>
<div class="t" style="left:388.20px;top:531.29px;font-size:11px;line-height:11px;color:#3a9a3a;transform:scaleX(0.9250);transform-origin:left;">(st) and -5 to 6 (end), 0.54m deep</div>
<div class="t" style="left:388.20px;top:544.14px;font-size:11px;line-height:11px;color:#3a9a3a;transform:scaleX(0.9250);transform-origin:left;">nom</div>
<div class="t" style="left:573.80px;top:526.69px;font-size:11px;line-height:11px;color:#3a9a3a;transform:scaleX(0.9460);transform-origin:left;">31/01/2022</div>
<div class="t" style="left:670.80px;top:526.69px;font-size:11px;line-height:11px;color:#3a9a3a;transform:scaleX(0.8450);transform-origin:left;">MLHW</div>
<div class="t" style="left:845.45px;top:526.69px;font-size:11px;line-height:11px;color:#3a9a3a;transform:scaleX(0.9300);transform-origin:right;">50</div>
<div class="t" style="left:936.65px;top:526.69px;font-size:11px;line-height:11px;color:#3a9a3a;transform:scaleX(0.9300);transform-origin:right;">110</div>
<div class="t" style="left:961.30px;top:526.69px;font-size:11px;line-height:11px;color:#3a9a3a;transform:scaleX(0.9000);transform-origin:left;">Conformed</div>
<div class="t" style="left:274.80px;top:564.59px;font-size:11px;line-height:11px;color:#1b1b1b;transform:scaleX(0.8300);transform-origin:left;">APBBBSGL001</div>
<div class="t" style="left:388.20px;top:562.59px;font-size:11px;line-height:11px;color:#1b1b1b;transform:scaleX(0.9250);transform-origin:left;">Test</div>
<div class="t" style="left:573.80px;top:565.19px;font-size:11px;line-height:11px;color:#1b1b1b;transform:scaleX(0.9460);transform-origin:left;">23/11/2021</div>
<div class="t" style="left:670.80px;top:565.19px;font-size:11px;line-height:11px;color:#1b1b1b;transform:scaleX(0.8450);transform-origin:left;">MLHW</div>
<div class="t" style="left:830.17px;top:565.19px;font-size:11px;line-height:11px;color:#1b1b1b;transform:scaleX(0.9300);transform-origin:right;">8,650</div>
<div class="t" style="left:926.67px;top:565.19px;font-size:11px;line-height:11px;color:#1b1b1b;transform:scaleX(0.9300);transform-origin:right;">8,728</div>
<div class="t" style="left:961.30px;top:565.19px;font-size:11px;line-height:11px;color:#1b1b1b;transform:scaleX(0.9000);transform-origin:left;">Open</div>
<div class="t" style="left:274.80px;top:596.59px;font-size:11px;line-height:11px;color:#3a9a3a;transform:scaleX(0.8300);transform-origin:left;">CGRWNSGL001</div>
<div class="t" style="left:388.20px;top:582.59px;font-size:11px;line-height:11px;color:#3a9a3a;transform:scaleX(0.9250);transform-origin:left;">Clear and grub northern approach</div>
<div class="t" style="left:388.20px;top:595.44px;font-size:11px;line-height:11px;color:#3a9a3a;transform:scaleX(0.9250);transform-origin:left;">MLHW - Ch 0 to 129  o/s -10 to 10</div>
<div class="t" style="left:388.20px;top:608.29px;font-size:11px;line-height:11px;color:#3a9a3a;transform:scaleX(0.9250);transform-origin:left;">both ends.</div>
<div class="t" style="left:573.80px;top:597.19px;font-size:11px;line-height:11px;color:#3a9a3a;transform:scaleX(0.9460);transform-origin:left;">11/11/2021</div>
<div class="t" style="left:670.80px;top:597.19px;font-size:11px;line-height:11px;color:#3a9a3a;transform:scaleX(0.8450);transform-origin:left;">MLHW</div>
<div class="t" style="left:851.58px;top:597.19px;font-size:11px;line-height:11px;color:#3a9a3a;transform:scaleX(0.9300);transform-origin:right;">0</div>
<div class="t" style="left:935.84px;top:597.19px;font-size:11px;line-height:11px;color:#3a9a3a;transform:scaleX(0.9300);transform-origin:right;">129</div>
<div class="t" style="left:961.30px;top:597.19px;font-size:11px;line-height:11px;color:#3a9a3a;transform:scaleX(0.9000);transform-origin:left;">Conformed</div>
<div class="t" style="left:274.80px;top:640.59px;font-size:11px;line-height:11px;color:#1b1b1b;transform:scaleX(0.8300);transform-origin:left;">CGRWSB001</div>
<div class="t" style="left:388.20px;top:626.59px;font-size:11px;line-height:11px;color:#1b1b1b;transform:scaleX(0.9250);transform-origin:left;">Clear and grub southern approach</div>
<div class="t" style="left:388.20px;top:639.44px;font-size:11px;line-height:11px;color:#1b1b1b;transform:scaleX(0.9250);transform-origin:left;">MLHW - Ch 169 to 283 o/s -10 to 10</div>
<div class="t" style="left:388.20px;top:652.29px;font-size:11px;line-height:11px;color:#1b1b1b;transform:scaleX(0.9250);transform-origin:left;">both ends.</div>
<div class="t" style="left:573.80px;top:641.19px;font-size:11px;line-height:11px;color:#1b1b1b;transform:scaleX(0.9460);transform-origin:left;">18/10/2021</div>
<div class="t" style="left:670.80px;top:641.19px;font-size:11px;line-height:11px;color:#1b1b1b;transform:scaleX(0.8450);transform-origin:left;">MLHW</div>
<div class="t" style="left:830.17px;top:641.19px;font-size:11px;line-height:11px;color:#1b1b1b;transform:scaleX(0.9300);transform-origin:right;">8,728</div>
<div class="t" style="left:926.67px;top:641.19px;font-size:11px;line-height:11px;color:#1b1b1b;transform:scaleX(0.9300);transform-origin:right;">8,728</div>
<div class="t" style="left:961.30px;top:641.19px;font-size:11px;line-height:11px;color:#1b1b1b;transform:scaleX(0.9000);transform-origin:left;">Open</div>
<div class="t" style="left:388.20px;top:670.59px;font-size:11px;line-height:11px;color:#1b1b1b;transform:scaleX(0.9250);transform-origin:left;">Clear and grub northern approach</div>
<div class="t" style="left:323.73px;top:695.19px;font-size:11px;line-height:11px;color:#555;transform:scaleX(0.9100);transform-origin:right;">17 Records</div>
<div class="t" style="left:350.70px;top:725.69px;font-size:11px;line-height:11px;color:#2c5f9e;transform:scaleX(0.9044);transform-origin:left;">New Lot</div>
<div class="t" style="left:1094.30px;top:199.30px;font-size:14.3px;line-height:14.3px;color:#484848;transform:scaleX(0.8785);transform-origin:left;">Related Items</div>
<div class="t" style="left:1109.80px;top:235.19px;font-size:11px;line-height:11px;color:#6e6e6e;transform:scaleX(0.8722);transform-origin:left;">Description</div>
<div class="t" style="left:1128.00px;top:256.69px;font-size:11px;line-height:11px;color:#3a3a3a;transform:scaleX(0.9166);transform-origin:left;">Quantities</div>
<div class="t" style="left:1146.00px;top:276.69px;font-size:11px;line-height:11px;color:#1a1a1a;transform:scaleX(0.9474);transform-origin:left;">200 lump - 6101.0...</div>
<div class="t" style="left:1128.00px;top:296.69px;font-size:11px;line-height:11px;color:#3a3a3a;transform:scaleX(0.9300);transform-origin:left;">Checklists</div>
<div class="t" style="left:1146.00px;top:316.69px;font-size:11px;line-height:11px;color:#f0283a;transform:scaleX(0.9185);transform-origin:left;">Erosion and Sedim...</div>
<div class="t" style="left:1128.00px;top:336.69px;font-size:11px;line-height:11px;color:#3a3a3a;transform:scaleX(0.9300);transform-origin:left;">ATPs</div>
<div class="t" style="left:1128.00px;top:356.69px;font-size:11px;line-height:11px;color:#3a3a3a;transform:scaleX(0.9300);transform-origin:left;">Approvals</div>
<div class="t" style="left:1146.00px;top:376.69px;font-size:11px;line-height:11px;color:#3a3a3a;transform:scaleX(0.9300);transform-origin:left;">Related</div>
<div class="t" style="left:1146.00px;top:396.69px;font-size:11px;line-height:11px;color:#3a3a3a;transform:scaleX(0.9300);transform-origin:left;">NCR Linked</div>
<div class="t" style="left:1146.00px;top:416.69px;font-size:11px;line-height:11px;color:#3a3a3a;transform:scaleX(0.9300);transform-origin:left;">Checklist Linked</div>
<div class="t" style="left:1163.00px;top:436.69px;font-size:11px;line-height:11px;color:#2a9a35;transform:scaleX(0.8660);transform-origin:left;">49-QVC EVGN...</div>
<div class="t" style="left:1128.00px;top:456.69px;font-size:11px;line-height:11px;color:#3a3a3a;transform:scaleX(0.9300);transform-origin:left;">NCRs</div>
<div class="t" style="left:1128.00px;top:476.69px;font-size:11px;line-height:11px;color:#3a3a3a;transform:scaleX(0.9239);transform-origin:left;">Test Requests</div>
<div class="t" style="left:1128.00px;top:496.69px;font-size:11px;line-height:11px;color:#3a3a3a;transform:scaleX(0.9300);transform-origin:left;">Surveys</div>
<div class="t" style="left:1128.00px;top:516.69px;font-size:11px;line-height:11px;color:#3a3a3a;transform:scaleX(0.9300);transform-origin:left;">Variations</div>
<div class="t" style="left:1128.00px;top:536.69px;font-size:11px;line-height:11px;color:#3a3a3a;transform:scaleX(0.9300);transform-origin:left;">Photos</div>
<div class="t" style="left:1128.00px;top:556.69px;font-size:11px;line-height:11px;color:#3a3a3a;transform:scaleX(0.9300);transform-origin:left;">Instructions</div>
<div class="t" style="left:1128.00px;top:576.69px;font-size:11px;line-height:11px;color:#3a3a3a;transform:scaleX(0.9300);transform-origin:left;">Filestore Docs</div>
<div class="t" style="left:1128.00px;top:596.69px;font-size:11px;line-height:11px;color:#3a3a3a;transform:scaleX(0.9300);transform-origin:left;">Contract Notices</div>
<div class="t" style="left:1128.00px;top:616.69px;font-size:11px;line-height:11px;color:#3a3a3a;transform:scaleX(0.9300);transform-origin:left;">Tags</div>
<div class="t" style="left:1128.00px;top:636.69px;font-size:11px;line-height:11px;color:#3a3a3a;transform:scaleX(0.9300);transform-origin:left;">Users</div>
<div class="t" style="left:1128.00px;top:656.69px;font-size:11px;line-height:11px;color:#3a3a3a;transform:scaleX(0.9300);transform-origin:left;">Subcontractors</div>
<div class="t" style="left:1128.00px;top:676.69px;font-size:11px;line-height:11px;color:#3a3a3a;transform:scaleX(0.9300);transform-origin:left;">Related Lots</div>
<div class="t" style="left:1146.00px;top:696.69px;font-size:11px;line-height:11px;color:#3a3a3a;transform:scaleX(0.9300);transform-origin:left;">Replaces</div>
<div class="t" style="left:255.20px;top:92.23px;font-size:14.5px;line-height:14.5px;color:#1e7ad8;font-weight:bold;transform:scaleX(0.8628);transform-origin:left;">ab</div>
</body></html>
